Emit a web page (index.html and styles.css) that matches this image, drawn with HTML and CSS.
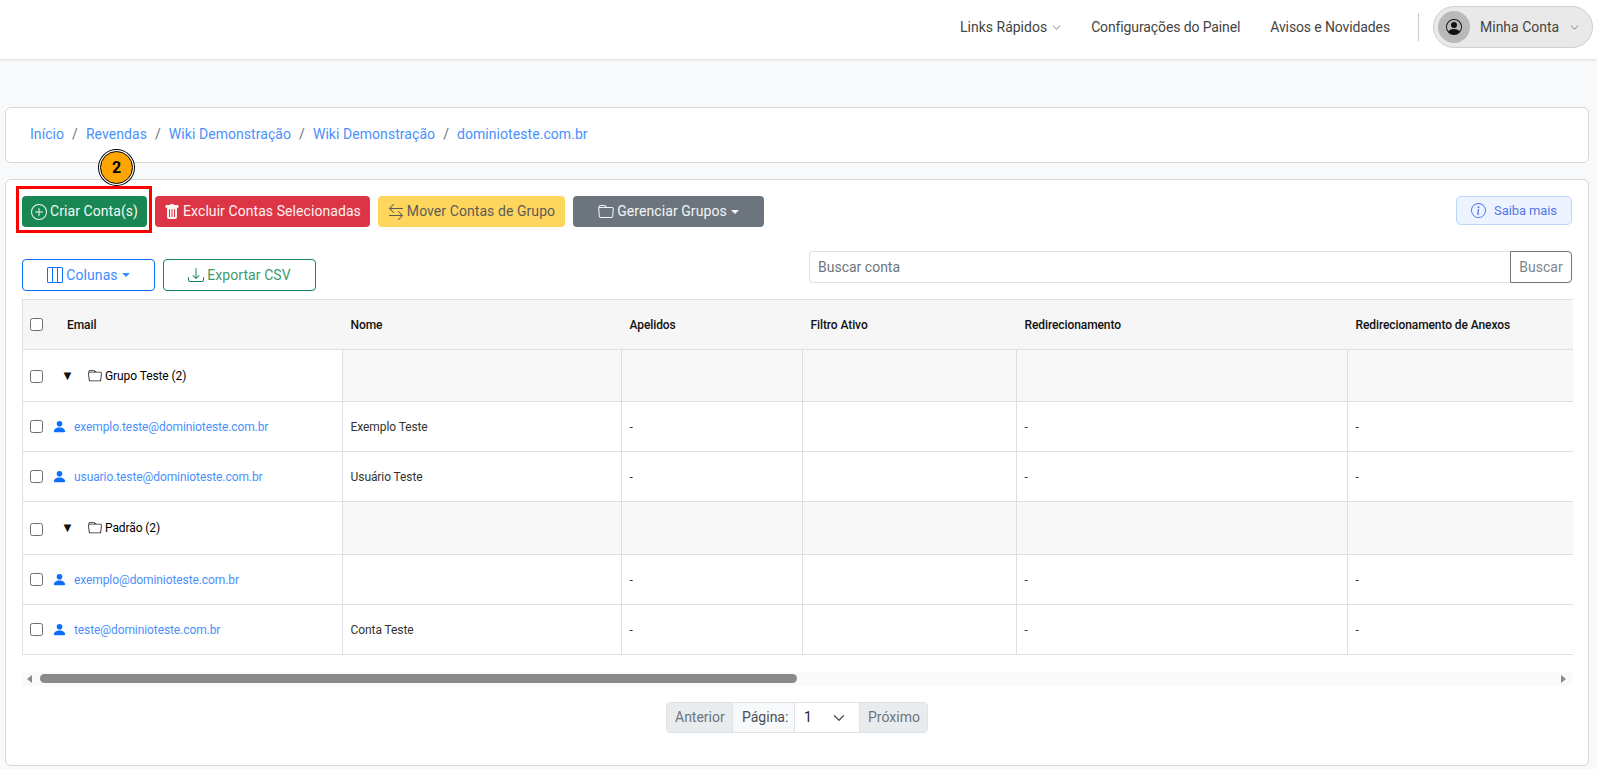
FILE: index.html
```html
<!DOCTYPE html>
<html lang="pt-BR">
<head>
<meta charset="utf-8">
<title>Contas</title>
<link rel="stylesheet" href="styles.css">
</head>
<body>
<svg class="defs" width="0" height="0" aria-hidden="true">
  <symbol id="i-plus" viewBox="0 0 16 16"><path d="M8 15A7 7 0 1 1 8 1a7 7 0 0 1 0 14zm0 1A8 8 0 1 0 8 0a8 8 0 0 0 0 16z"/><path d="M8 4a.5.5 0 0 1 .5.5v3h3a.5.5 0 0 1 0 1h-3v3a.5.5 0 0 1-1 0v-3h-3a.5.5 0 0 1 0-1h3v-3A.5.5 0 0 1 8 4z"/></symbol>
  <symbol id="i-trash" viewBox="0 0 16 16"><path d="M2.5 1a1 1 0 0 0-1 1v1a1 1 0 0 0 1 1H3v9a2 2 0 0 0 2 2h6a2 2 0 0 0 2-2V4h.5a1 1 0 0 0 1-1V2a1 1 0 0 0-1-1H10a1 1 0 0 0-1-1H7a1 1 0 0 0-1 1H2.5zm3 4a.5.5 0 0 1 .5.5v7a.5.5 0 0 1-1 0v-7a.5.5 0 0 1 .5-.5zM8 5a.5.5 0 0 1 .5.5v7a.5.5 0 0 1-1 0v-7A.5.5 0 0 1 8 5zm3 .5v7a.5.5 0 0 1-1 0v-7a.5.5 0 0 1 1 0z"/></symbol>
  <symbol id="i-swap" viewBox="0 0 16 16"><path d="M1 11.5a.5.5 0 0 0 .5.5h11.793l-3.147 3.146a.5.5 0 0 0 .708.708l4-4a.5.5 0 0 0 0-.708l-4-4a.5.5 0 0 0-.708.708L13.293 11H1.5a.5.5 0 0 0-.5.5zm14-7a.5.5 0 0 1-.5.5H2.707l3.147 3.146a.5.5 0 1 1-.708.708l-4-4a.5.5 0 0 1 0-.708l4-4a.5.5 0 1 1 .708.708L2.707 4H14.5a.5.5 0 0 1 .5.5z"/></symbol>
  <symbol id="i-folder" viewBox="0 0 16 16"><path d="M.54 3.87.5 3a2 2 0 0 1 2-2h3.672a2 2 0 0 1 1.414.586l.828.828A2 2 0 0 0 9.828 3h3.982a2 2 0 0 1 1.992 2.181l-.637 7A2 2 0 0 1 13.174 14H2.826a2 2 0 0 1-1.991-1.819l-.637-7a1.99 1.99 0 0 1 .342-1.31zM2.19 4a1 1 0 0 0-.996 1.09l.637 7a1 1 0 0 0 .995.91h10.348a1 1 0 0 0 .995-.91l.637-7A1 1 0 0 0 13.81 4H2.19zm4.69-1.707A1 1 0 0 0 6.172 2H2.5a1 1 0 0 0-1 .981l.006.139C1.72 3.042 1.95 3 2.19 3h5.396l-.707-.707z"/></symbol>
  <symbol id="i-cols" viewBox="0 0 16 16"><path d="M0 1.5A1.5 1.5 0 0 1 1.5 0h13A1.5 1.5 0 0 1 16 1.5v13a1.5 1.5 0 0 1-1.5 1.5h-13A1.5 1.5 0 0 1 0 14.5v-13zM1.5 1a.5.5 0 0 0-.5.5v13a.5.5 0 0 0 .5.5H5V1H1.5zM10 15V1H6v14h4zm1 0h3.5a.5.5 0 0 0 .5-.5v-13a.5.5 0 0 0-.5-.5H11v14z"/></symbol>
  <symbol id="i-down" viewBox="0 0 16 16"><path d="M.5 9.9a.5.5 0 0 1 .5.5v2.5a1 1 0 0 0 1 1h12a1 1 0 0 0 1-1v-2.5a.5.5 0 0 1 1 0v2.5a2 2 0 0 1-2 2H2a2 2 0 0 1-2-2v-2.5a.5.5 0 0 1 .5-.5z"/><path d="M7.646 11.854a.5.5 0 0 0 .708 0l3-3a.5.5 0 0 0-.708-.708L8.5 10.293V1.5a.5.5 0 0 0-1 0v8.793L5.354 8.146a.5.5 0 1 0-.708.708l3 3z"/></symbol>
  <symbol id="i-info" viewBox="0 0 16 16"><path d="M8 15A7 7 0 1 1 8 1a7 7 0 0 1 0 14zm0 1A8 8 0 1 0 8 0a8 8 0 0 0 0 16z"/><path d="m8.93 6.588-2.29.287-.082.38.45.083c.294.07.352.176.288.469l-.738 3.468c-.194.897.105 1.319.808 1.319.545 0 1.178-.252 1.465-.598l.088-.416c-.2.176-.492.246-.686.246-.275 0-.375-.193-.304-.533L8.93 6.588zM9 4.5a1 1 0 1 1-2 0 1 1 0 0 1 2 0z"/></symbol>
  <symbol id="i-person" viewBox="0 0 16 16"><path d="M3 14s-1 0-1-1 1-4 6-4 6 3 6 4-1 1-1 1H3zm5-6a3 3 0 1 0 0-6 3 3 0 0 0 0 6z"/></symbol>
  <symbol id="i-avatar" viewBox="0 0 16 16"><path d="M11 6a3 3 0 1 1-6 0 3 3 0 0 1 6 0z"/><path fill-rule="evenodd" d="M0 8a8 8 0 1 1 16 0A8 8 0 0 1 0 8zm8-7a7 7 0 0 0-5.468 11.37C3.242 11.226 4.805 10 8 10s4.757 1.225 5.468 2.37A7 7 0 0 0 8 1z"/></symbol>
  <symbol id="i-chev" viewBox="0 0 16 16"><path fill-rule="evenodd" d="M1.646 4.646a.5.5 0 0 1 .708 0L8 10.293l5.646-5.647a.5.5 0 0 1 .708.708l-6 6a.5.5 0 0 1-.708 0l-6-6a.5.5 0 0 1 0-.708z"/></symbol>
</svg>

<header class="navbar">
  <a class="nav-link">Links Rápidos <svg class="chev"><use href="#i-chev"/></svg></a>
  <a class="nav-link nav-tight">Configurações do Painel</a>
  <a class="nav-link nav-tight">Avisos e Novidades</a>
  <span class="nav-divider"></span>
  <a class="account">
    <span class="avatar"><svg class="avatar-icon"><use href="#i-avatar"/></svg></span>
    <span class="account-name">Minha Conta</span>
    <svg class="chev"><use href="#i-chev"/></svg>
  </a>
</header>

<main class="page">
  <nav class="card breadcrumb">
    <a>Início</a><span class="sep">/</span>
    <a>Revendas</a><span class="sep">/</span>
    <a>Wiki Demonstração</a><span class="sep">/</span>
    <a>Wiki Demonstração</a><span class="sep">/</span>
    <a>dominioteste.com.br</a>
  </nav>

  <section class="card panel">
    <div class="toolbar">
      <div class="btn-group">
        <span class="marked">
          <button class="btn btn-green"><svg class="ico"><use href="#i-plus"/></svg>Criar Conta(s)</button>
          <span class="mark-box"></span>
          <span class="mark-badge">2</span>
        </span>
        <button class="btn btn-red"><svg class="ico"><use href="#i-trash"/></svg>Excluir Contas Selecionadas</button>
        <button class="btn btn-yellow"><svg class="ico ico-wide"><use href="#i-swap"/></svg>Mover Contas de Grupo</button>
        <button class="btn btn-gray"><svg class="ico"><use href="#i-folder"/></svg>Gerenciar Grupos<span class="caret"></span></button>
      </div>
      <a class="btn-info"><svg class="ico-info"><use href="#i-info"/></svg>Saiba mais</a>
    </div>

    <div class="filters">
      <div class="btn-group">
        <button class="btn btn-outline-blue"><svg class="ico"><use href="#i-cols"/></svg>Colunas<span class="caret"></span></button>
        <button class="btn btn-outline-green"><svg class="ico"><use href="#i-down"/></svg>Exportar CSV</button>
      </div>
      <div class="search">
        <span class="search-input">Buscar conta</span>
        <button class="search-btn">Buscar</button>
      </div>
    </div>

    <table class="grid">
      <colgroup>
        <col class="c1"><col class="c2"><col class="c3"><col class="c4"><col class="c5"><col class="c6">
      </colgroup>
      <thead>
        <tr>
          <th><span class="first-cell"><input type="checkbox" class="chk"><span class="th-email">Email</span></span></th>
          <th>Nome</th><th>Apelidos</th><th>Filtro Ativo</th><th>Redirecionamento</th><th>Redirecionamento de Anexos</th>
        </tr>
      </thead>
      <tbody>
        <tr class="group">
          <td><span class="first-cell"><input type="checkbox" class="chk chk-low"><span class="tri">▼</span><svg class="ico-group"><use href="#i-folder"/></svg><span>Grupo Teste (2)</span></span></td>
          <td></td><td></td><td></td><td></td><td></td>
        </tr>
        <tr>
          <td><span class="first-cell"><input type="checkbox" class="chk"><svg class="ico-user"><use href="#i-person"/></svg><a class="mail">exemplo.teste@dominioteste.com.br</a></span></td>
          <td>Exemplo Teste</td><td>-</td><td></td><td>-</td><td>-</td>
        </tr>
        <tr>
          <td><span class="first-cell"><input type="checkbox" class="chk"><svg class="ico-user"><use href="#i-person"/></svg><a class="mail">usuario.teste@dominioteste.com.br</a></span></td>
          <td>Usuário Teste</td><td>-</td><td></td><td>-</td><td>-</td>
        </tr>
        <tr class="group group-tall">
          <td><span class="first-cell"><input type="checkbox" class="chk chk-low"><span class="tri">▼</span><svg class="ico-group"><use href="#i-folder"/></svg><span>Padrão (2)</span></span></td>
          <td></td><td></td><td></td><td></td><td></td>
        </tr>
        <tr>
          <td><span class="first-cell"><input type="checkbox" class="chk"><svg class="ico-user"><use href="#i-person"/></svg><a class="mail">exemplo@dominioteste.com.br</a></span></td>
          <td></td><td>-</td><td></td><td>-</td><td>-</td>
        </tr>
        <tr>
          <td><span class="first-cell"><input type="checkbox" class="chk"><svg class="ico-user"><use href="#i-person"/></svg><a class="mail">teste@dominioteste.com.br</a></span></td>
          <td>Conta Teste</td><td>-</td><td></td><td>-</td><td>-</td>
        </tr>
      </tbody>
    </table>

    <div class="scrollbar">
      <span class="arrow arrow-left"></span>
      <span class="thumb"></span>
      <span class="arrow arrow-right"></span>
    </div>

    <div class="pager-wrap">
      <div class="pager">
        <span class="pg pg-btn pg-prev">Anterior</span>
        <span class="pg pg-label">Página:</span>
        <span class="pg pg-select">1<svg class="pg-chev"><use href="#i-chev"/></svg></span>
        <span class="pg pg-btn pg-next">Próximo</span>
      </div>
    </div>
  </section>
</main>
</body>
</html>
```

FILE: styles.css
```css
* { box-sizing: border-box; }
html, body { height: 100%; }
body {
  margin: 0;
  background: #f8f9fa;
  color: #212529;
  font-family: Roboto, "Liberation Sans", sans-serif;
  font-size: 14px;
  line-height: 21px;
  overflow: hidden;
}
.defs { position: absolute; }
svg { fill: currentColor; flex: none; }

/* navbar */
.navbar {
  height: 59px;
  background: #fff;
  box-shadow: 0 1px 2px rgba(0,0,0,.12);
  display: flex;
  align-items: center;
  justify-content: flex-end;
  padding: 0 4px 5px 0;
}
.nav-link { display: flex; align-items: center; color: #444; margin-right: 30px; }
.nav-tight { letter-spacing: -.12px; }
.chev { width: 9px; height: 9px; margin-left: 5px; color: #777; }
.nav-divider { width: 1px; height: 28px; background: #ccc; margin-right: 14px; margin-left: -2px; }
.account {
  width: 160px; height: 42px;
  display: flex; align-items: center;
  background: #e9e9e9;
  border: 1px solid #d0d0d0;
  border-radius: 21px;
  padding-left: 4px;
  color: #444;
}
.avatar { width: 32px; height: 32px; border-radius: 50%; background: #b9b9b9; display: flex; align-items: center; justify-content: center; }
.avatar-icon { width: 16px; height: 16px; color: #111; }
.account-name { margin-left: 10px; }
.account .chev { margin-left: 11px; }

/* page */
.page { padding: 48px 8px 0 5px; }
.card { background: #fff; border: 1px solid #d6d8db; border-radius: 6px; }
.breadcrumb { height: 56px; padding: 0 24px 2px; display: flex; align-items: center; margin-bottom: 16px; color: #6c757d; letter-spacing: .06px; }
.breadcrumb a { color: #4a90fd; }
.sep { margin: 0 8px; }
.panel { height: 587px; padding: 16px; }

/* toolbar */
.toolbar { display: flex; justify-content: space-between; align-items: flex-start; margin-bottom: 24px; }
.btn-group { display: flex; gap: 8px; }
.btn {
  height: 31px;
  padding: 0;
  font: inherit;
  letter-spacing: .07px;
  border: 1px solid transparent;
  border-radius: 4px;
  display: inline-flex; align-items: center; justify-content: center;
  white-space: nowrap;
}
.ico { width: 16px; height: 16px; margin-right: 3px; }
.btn-green { background: #198754; color: #f2f8f5; width: 125px; }
.btn-red { background: #dc3545; color: #fdf2f3; width: 215px; }
.btn-yellow { background: #ffc107; color: #000; opacity: .65; width: 187px; }
.btn-gray { background: #6c757d; color: #f4f5f6; width: 191px; }
.caret { width: 0; height: 0; margin-left: 4px; border-top: 4px solid currentColor; border-left: 4px solid transparent; border-right: 4px solid transparent; }
.marked { position: relative; display: inline-flex; }
.mark-box { position: absolute; left: -6px; top: -10px; width: 136px; height: 47px; border: 3px solid #f00; }
.mark-badge {
  position: absolute; left: 78px; top: -45px;
  width: 33px; height: 33px;
  border-radius: 50%;
  background: #ffa500;
  border: 1px solid #000;
  box-shadow: 0 0 0 1px #fff, 0 0 0 2px #000;
  color: #000; font-weight: 700; font-size: 16px;
  display: flex; align-items: center; justify-content: center;
}
.btn-info {
  width: 116px; height: 29px;
  display: flex; align-items: center; justify-content: center;
  background: #edf4ff;
  border: 1px solid #bcd7fb;
  border-radius: 5px;
  color: #5277e8;
  font-size: 13px;
  letter-spacing: -.1px;
}
.ico-info { width: 15px; height: 15px; margin-right: 8px; }

/* filters */
.filters { display: flex; justify-content: space-between; align-items: flex-start; height: 48px; }
.filters .btn-group { margin-top: 8px; }
.btn-outline-blue { width: 133px; height: 32px; background: #fff; border-color: #0d6efd; color: #3d8bfd; }
.btn-outline-blue .ico { color: #0d6efd; }
.btn-outline-green { width: 153px; height: 32px; background: #fff; border-color: #198754; color: #3d9a70; }
.btn-outline-green .ico { color: #198754; }
.search { display: flex; width: 763px; height: 32px; }
.search-input { flex: 1; border: 1px solid #dee2e6; border-right: 0; border-radius: 4px 0 0 4px; padding: 0 8px; display: flex; align-items: center; color: #6c757d; }
.search-btn { width: 62px; font: inherit; background: #fff; color: #7d858c; border: 1px solid #6c757d; border-radius: 0 4px 4px 0; padding: 0; }

/* table */
.grid { width: 1550px; table-layout: fixed; border-collapse: collapse; font-size: 12px; line-height: 18px; color: #333; letter-spacing: -.09px; }
.c1 { width: 320px; } .c2 { width: 279px; } .c3 { width: 181px; }
.c4 { width: 214px; } .c5 { width: 331px; } .c6 { width: 225px; }
.grid th { height: 50px; background: #f6f6f6; font-weight: 500; color: #111; text-align: left; padding: 0 8px; border-top: 1px solid #dedfe6; border-bottom: 1px solid #dedfe6; }
.grid th:first-child { border-left: 1px solid #dedfe6; }
.grid td { height: 50px; padding: 0 7.6px; border: 1px solid #dedfe6; border-right: 0; }
.grid td:first-child { padding: 0 7px; }
.grid .group td { height: 52px; background: #f8f8f8; }
.grid .group-tall td { height: 53px; }
.grid .group td:first-child { background: #fff; color: #000; }
.first-cell { display: flex; align-items: center; }
.chk { appearance: none; width: 13px; height: 13px; margin: 0; border: 1px solid #6f6f6f; border-radius: 2.5px; background: #fff; flex: none; }
.grid th .chk { margin-left: -1px; }
.chk-low { margin-top: 2px; }
.th-email { margin-left: 24px; }
.tri { width: 10px; margin-left: 18px; font-size: 13px; color: #111; }
.ico-group { width: 14px; height: 14px; margin: 0 3px 0 17px; color: #222; }
.ico-user { width: 15px; height: 15px; margin-left: 9px; color: #0d6efd; }
.mail { margin-left: 7px; color: #4a90fd; }

/* scrollbar */
.scrollbar { position: relative; height: 14px; margin-top: 17px; background: #fafafa; }
.thumb { position: absolute; left: 18px; top: 2px; width: 757px; height: 9px; border-radius: 5px; background: #8a8a8a; }
.arrow { position: absolute; top: 3px; width: 0; height: 0; border-top: 4px solid transparent; border-bottom: 4px solid transparent; }
.arrow-left { left: 5px; border-right: 5px solid #8a8a8a; }
.arrow-right { right: 6px; border-left: 5px solid #8a8a8a; }

/* pager */
.pager-wrap { display: flex; justify-content: center; margin-top: 16px; }
.pager { display: flex; height: 31px; border: 1px solid #dee2e6; border-radius: 4px; overflow: hidden; color: #6c757d; }
.pg { display: flex; align-items: center; border-left: 1px solid #dee2e6; padding: 0 8px; }
.pg:first-child { border-left: 0; }
.pg-btn { background: #e9ecef; }
.pg-prev { width: 65px; }
.pg-next { width: 68px; }
.pg-label { width: 62px; padding: 0 0 0 9px; background: #f8f9fa; color: #495057; }
.pg-select { width: 65px; padding-left: 9px; background: #fff; color: #212529; justify-content: space-between; }
.pg-chev { width: 12px; height: 12px; margin-right: 6px; color: #343a40; stroke: currentColor; stroke-width: .8px; }
```
